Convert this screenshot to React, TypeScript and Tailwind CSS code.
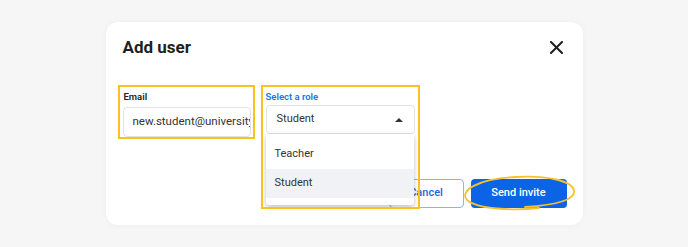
import React from "react";

export default function App() {
  return (
    <div
      className="w-[688px] h-[247px] bg-[#f6f6f6] flex items-center justify-center"
      style={{ fontFamily: "Roboto, 'Liberation Sans', sans-serif" }}
    >
      <div className="w-[477px] h-[203px] bg-white rounded-[12px] shadow-[0_0_6px_rgba(0,0,0,0.04)] flex flex-col pl-[17px] pr-[16px] pt-[13px] pb-[17px]">
        <div className="flex items-center justify-between h-[24px]">
          <div className="text-[17px] leading-[24px] font-bold text-[#1f1f1f]">Add user</div>
          <svg width="13" height="13" viewBox="0 0 13 13" className="mr-[4px]">
            <path d="M1 1 L12 12 M12 1 L1 12" stroke="#1f1f1f" strokeWidth="2" strokeLinecap="square" />
          </svg>
        </div>

        <div className="flex mt-[26px] -ml-[5px] gap-[6px]">
          <div className="w-[137px] h-[54px] border-2 border-[#f7c321] pl-[3px] pt-[3px] flex flex-col">
            <div className="text-[9.5px] leading-[14px] font-semibold text-[#222] pl-[1px]">Email</div>
            <div className="mt-[3px] w-[128px] h-[30px] border border-[#e3e3e3] rounded-[4px] flex items-center pl-[9px] overflow-hidden">
              <span className="text-[11.5px] text-[#333] whitespace-nowrap">new.student@university.edu</span>
            </div>
          </div>

          <div className="relative w-[159px] h-[54px] pl-[5px] pt-[5px] flex flex-col">
            <div className="text-[9.5px] leading-[14px] font-semibold text-[#1a73e8]">Select a role</div>
            <div className="mt-[1px] w-[149px] h-[29px] border border-[#e3e3e3] rounded-[4px] flex items-center justify-between pl-[10px] pr-[11px]">
              <span className="text-[11px] text-[#333]">Student</span>
              <svg width="8" height="4" viewBox="0 0 8 4">
                <path d="M0 4 L4 0 L8 4 Z" fill="#333" />
              </svg>
            </div>
            <div className="absolute left-[5px] top-[49px] w-[148px] h-[71px] bg-white rounded-[3px] shadow-[0_2px_5px_rgba(0,0,0,0.25)] pt-[6px] z-10">
              <div className="h-[29px] flex items-center pl-[9px] text-[11px] text-[#333]">Teacher</div>
              <div className="h-[29px] flex items-center pl-[9px] text-[11px] text-[#333] bg-[#f1f2f5]">Student</div>
            </div>
            <div className="absolute left-0 top-0 w-[159px] h-[124px] border-2 border-[#f7c321] pointer-events-none z-20" />
          </div>
        </div>

        <div className="mt-auto flex justify-end gap-[7px]">
          <div className="w-[75px] h-[29px] border border-[#8db4f0] rounded-[4px] flex items-center justify-center text-[11px] font-medium text-[#1a66e0]">
            Cancel
          </div>
          <div className="relative w-[96px] h-[29px] bg-[#0b64e6] rounded-[4px] flex items-center justify-center text-[11px] font-medium text-white">
            Send invite
            <svg
              className="absolute left-[-8px] top-[-4px] overflow-visible pointer-events-none"
              width="112"
              height="38"
              viewBox="0 0 112 38"
            >
              <path
                d="M76 33 C 50 36, 14 34, 4 25 C -4 16, 14 4, 52 2 C 84 0, 110 6, 111 16 C 112 24, 96 30, 62 32"
                fill="none"
                stroke="#f2c230"
                strokeWidth="1.8"
                strokeLinecap="round"
              />
            </svg>
          </div>
        </div>
      </div>
    </div>
  );
}
